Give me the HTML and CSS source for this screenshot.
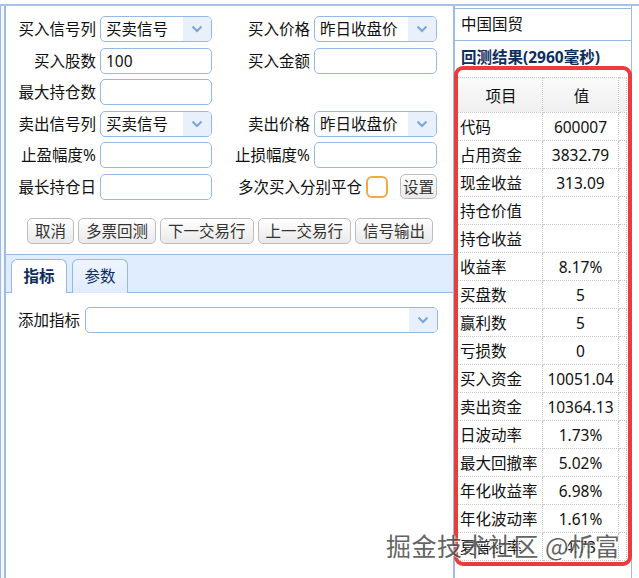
FILE: index.html
```html
<!DOCTYPE html>
<html lang="zh">
<head>
    <meta charset="UTF-8">
    <title>回测</title>
    <link rel="stylesheet" href="styles.css">
</head>
<body>
<div class="screen">
    <div class="panels">
        <div class="edge"></div>
        <div class="main">
            <div class="form">
                <label>买入信号列</label>
                <div class="combo"><span class="combo-text">买卖信号</span><span class="arrow"><svg width="12" height="8" viewBox="0 0 12 8"><path d="M1.5 1.5 L6 6 L10.5 1.5" fill="none" stroke="#7ba5d9" stroke-width="2"/></svg></span></div>
                <label>买入价格</label>
                <div class="combo"><span class="combo-text">昨日收盘价</span><span class="arrow"><svg width="12" height="8" viewBox="0 0 12 8"><path d="M1.5 1.5 L6 6 L10.5 1.5" fill="none" stroke="#7ba5d9" stroke-width="2"/></svg></span></div>

                <label>买入股数</label>
                <div class="field">100</div>
                <label>买入金额</label>
                <div class="field"></div>

                <label>最大持仓数</label>
                <div class="field"></div>
                <span></span>
                <span></span>

                <label>卖出信号列</label>
                <div class="combo"><span class="combo-text">买卖信号</span><span class="arrow"><svg width="12" height="8" viewBox="0 0 12 8"><path d="M1.5 1.5 L6 6 L10.5 1.5" fill="none" stroke="#7ba5d9" stroke-width="2"/></svg></span></div>
                <label>卖出价格</label>
                <div class="combo"><span class="combo-text">昨日收盘价</span><span class="arrow"><svg width="12" height="8" viewBox="0 0 12 8"><path d="M1.5 1.5 L6 6 L10.5 1.5" fill="none" stroke="#7ba5d9" stroke-width="2"/></svg></span></div>

                <label>止盈幅度%</label>
                <div class="field"></div>
                <label>止损幅度%</label>
                <div class="field"></div>

                <label>最长持仓日</label>
                <div class="field"></div>
                <div class="merge">
                    <label>多次买入分别平仓</label>
                    <span class="check"></span>
                    <button class="btn small">设置</button>
                </div>
            </div>

            <div class="actions">
                <button class="btn">取消</button>
                <button class="btn">多票回测</button>
                <button class="btn">下一交易行</button>
                <button class="btn">上一交易行</button>
                <button class="btn">信号输出</button>
            </div>

            <div class="tabs-head">
                <span class="tab active">指标</span>
                <span class="tab">参数</span>
            </div>
            <div class="tab-body">
                <label>添加指标</label>
                <div class="combo wide"><span class="combo-text"></span><span class="arrow"><svg width="12" height="8" viewBox="0 0 12 8"><path d="M1.5 1.5 L6 6 L10.5 1.5" fill="none" stroke="#7ba5d9" stroke-width="2"/></svg></span></div>
            </div>
        </div>

        <div class="result">
            <div class="code-box">中国国贸</div>
            <div class="result-title">回测结果(2960毫秒)</div>
            <table class="grid">
                <tr class="head"><th>项目</th><th>值</th><th></th></tr>
                <tr><td>代码</td><td class="num">600007</td><td></td></tr>
                <tr><td>占用资金</td><td class="num">3832.79</td><td></td></tr>
                <tr><td>现金收益</td><td class="num">313.09</td><td></td></tr>
                <tr><td>持仓价值</td><td class="num"></td><td></td></tr>
                <tr><td>持仓收益</td><td class="num"></td><td></td></tr>
                <tr><td>收益率</td><td class="num">8.17%</td><td></td></tr>
                <tr><td>买盘数</td><td class="num">5</td><td></td></tr>
                <tr><td>赢利数</td><td class="num">5</td><td></td></tr>
                <tr><td>亏损数</td><td class="num">0</td><td></td></tr>
                <tr><td>买入资金</td><td class="num">10051.04</td><td></td></tr>
                <tr><td>卖出资金</td><td class="num">10364.13</td><td></td></tr>
                <tr><td>日波动率</td><td class="num">1.73%</td><td></td></tr>
                <tr><td>最大回撤率</td><td class="num">5.02%</td><td></td></tr>
                <tr><td>年化收益率</td><td class="num">6.98%</td><td></td></tr>
                <tr><td>年化波动率</td><td class="num">1.61%</td><td></td></tr>
                <tr><td>夏普比率</td><td class="num">4.73</td><td></td></tr>
            </table>
        </div>
    </div>

    <div class="mark"></div>
    <div class="watermark">掘金技术社区 @析富</div>
</div>
</body>
</html>
```

FILE: styles.css
```css
* {
    box-sizing: border-box;
}
body {
    margin: 0;
    font-family: "Noto Sans", "Noto Sans CJK SC", sans-serif;
    font-size: 15.5px;
    color: #111;
    background-color: #fff;
}
.screen {
    position: relative;
    width: 639px;
    height: 578px;
    overflow: hidden;
}
.panels {
    display: flex;
    margin-top: 4px;
    height: 574px;
    border-top: 2px solid #a6c2e8;
}
.edge {
    width: 4px;
    border-left: 1px solid #9dbbe4;
    background-color: #f4f8fe;
}
.main {
    width: 450px;
    border-left: 2px solid #9dbbe4;
    border-right: 1px solid #9dbbe4;
}
.form {
    display: grid;
    grid-template-columns: 90px 112px 94px 123px;
    grid-auto-rows: 26px;
    column-gap: 4px;
    row-gap: 5.6px;
    padding-top: 10px;
}
.form label {
    text-align: right;
    line-height: 26px;
    white-space: nowrap;
}
.field,
.combo {
    border: 1px solid #95b8e7;
    border-radius: 5px;
    height: 26px;
    line-height: 24px;
    padding-left: 5px;
    background-color: #fff;
}
.combo {
    display: flex;
    padding-left: 0;
    overflow: hidden;
}
.combo-text {
    flex: 1;
    padding-left: 5px;
}
.arrow {
    width: 28px;
    display: flex;
    align-items: center;
    justify-content: center;
    background-color: #e8f0fb;
}
.merge {
    grid-column: span 2;
    display: flex;
    align-items: center;
    justify-content: flex-end;
}
.check {
    width: 22px;
    height: 22px;
    margin-left: 4px;
    border: 2px solid #f2aa3c;
    border-radius: 6px;
    background-color: #fff;
}
.btn {
    font-family: inherit;
    font-size: 15.5px;
    color: #333;
    height: 26px;
    padding: 0 7px;
    line-height: 24px;
    border: 1px solid #bdbdbd;
    border-radius: 5px;
    background: linear-gradient(#ffffff, #e9e9e9);
    cursor: pointer;
}
.btn.small {
    width: 37px;
    height: 25px;
    padding: 0;
    margin-left: 12px;
}
.actions {
    display: flex;
    gap: 4px;
    margin-top: 18px;
    padding-left: 21px;
}
.tabs-head {
    display: flex;
    align-items: flex-end;
    gap: 5px;
    height: 39px;
    margin-top: 10px;
    padding-left: 5px;
    background-color: #e0ecff;
    border-top: 1px solid #95b8e7;
    border-bottom: 1px solid #95b8e7;
}
.tab {
    width: 56px;
    height: 34px;
    margin-bottom: -1px;
    line-height: 32px;
    text-align: center;
    color: #0e2d5f;
    border: 1px solid #95b8e7;
    border-bottom: none;
    border-radius: 6px 6px 0 0;
    background: linear-gradient(#eff5ff, #e0ecff);
}
.tab.active {
    background: #fff;
    font-weight: bold;
}
.tab-body {
    display: flex;
    align-items: center;
    padding: 14px 0 0 12px;
}
.tab-body label {
    margin-right: 5px;
}
.combo.wide {
    width: 353px;
}
.result {
    width: 178px;
    border-left: 1px solid #9dbbe4;
    border-right: 1px solid #9dbbe4;
}
.code-box {
    margin-top: 2px;
    height: 33px;
    line-height: 31px;
    padding-left: 6px;
    border-top: 1px solid #95b8e7;
    border-bottom: 1px solid #95b8e7;
}
.result-title {
    padding: 4px 0 0 6px;
    line-height: 24px;
    font-weight: bold;
    color: #0e2d5f;
}
.grid {
    border-collapse: collapse;
    margin: 8px 0 0 2px;
    width: 170px;
    table-layout: fixed;
}
.grid th,
.grid td {
    border: 1px dotted #c8c8c8;
    height: 28px;
    padding: 0 0 0 2px;
    white-space: nowrap;
    overflow: hidden;
    font-weight: normal;
}
.grid th:nth-child(1),
.grid td:nth-child(1) {
    width: 85px;
}
.grid th:nth-child(2),
.grid td:nth-child(2) {
    width: 76px;
}
.grid .head th {
    height: 35px;
    text-align: center;
    background: linear-gradient(#fafafa, #efefef);
}
.grid .num {
    text-align: center;
    padding: 0;
}
.mark {
    position: absolute;
    left: 454px;
    top: 66px;
    width: 178px;
    height: 500px;
    border: 4px solid #eb3b3b;
    border-radius: 9px;
}
.watermark {
    position: absolute;
    left: 386px;
    top: 527px;
    font-family: "Noto Sans CJK SC", sans-serif;
    font-size: 25px;
    letter-spacing: 0.5px;
    color: #4a4a4a;
    opacity: 0.85;
    text-shadow: 0 0 2px #fff, 1px 1px 0 #fff;
    white-space: nowrap;
}
```
